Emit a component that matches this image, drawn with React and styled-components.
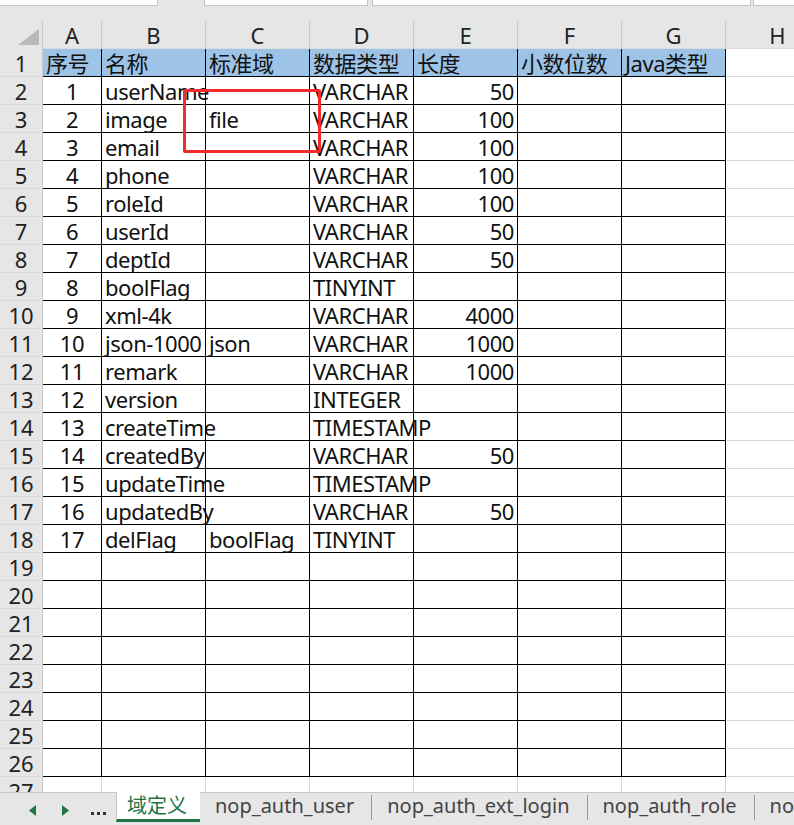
import React from "react";
import styled, { createGlobalStyle } from "styled-components";

const GlobalStyle = createGlobalStyle`
  html, body {
    margin: 0;
    padding: 0;
    background: #fff;
    overflow: hidden;
  }
  body {
    font-family: "Noto Sans", "Noto Sans CJK SC", sans-serif;
    color: #111;
  }
`;

const letters = ["A", "B", "C", "D", "E", "F", "G", "H"];
const heading = ["序号", "名称", "标准域", "数据类型", "长度", "小数位数", "Java类型"];
const fields = [
  ["userName", "", "VARCHAR", 50],
  ["image", "file", "VARCHAR", 100],
  ["email", "", "VARCHAR", 100],
  ["phone", "", "VARCHAR", 100],
  ["roleId", "", "VARCHAR", 100],
  ["userId", "", "VARCHAR", 50],
  ["deptId", "", "VARCHAR", 50],
  ["boolFlag", "", "TINYINT", ""],
  ["xml-4k", "", "VARCHAR", 4000],
  ["json-1000", "json", "VARCHAR", 1000],
  ["remark", "", "VARCHAR", 1000],
  ["version", "", "INTEGER", ""],
  ["createTime", "", "TIMESTAMP", ""],
  ["createdBy", "", "VARCHAR", 50],
  ["updateTime", "", "TIMESTAMP", ""],
  ["updatedBy", "", "VARCHAR", 50],
  ["delFlag", "boolFlag", "TINYINT", ""],
];
const ROWS = 27;
const BORDERED_ROWS = 26;
const BORDERED_COLS = 7;
const tabs = ["nop_auth_user", "nop_auth_ext_login", "nop_auth_role", "nop_auth_user_role"];

function cellValue(row, col) {
  if (row === 1) return heading[col] || "";
  const f = fields[row - 2];
  if (!f) return "";
  if (col === 0) return row - 1;
  return col <= 4 ? f[col - 1] : "";
}

function cellAlign(row, col) {
  if (row === 1) return "left";
  if (col === 0) return "center";
  if (col === 4) return "right";
  return "left";
}

export default function App() {
  const renderRow = (row) => (
    <React.Fragment key={row}>
      <RowHead>{row}</RowHead>
      {letters.map((l, col) => (
        <Cell
          key={l}
          $align={cellAlign(row, col)}
          $head={row === 1 && col < BORDERED_COLS}
          $dark={row <= BORDERED_ROWS && col < BORDERED_COLS}
        >
          {cellValue(row, col)}
        </Cell>
      ))}
    </React.Fragment>
  );

  const rows = [];
  for (let r = 1; r <= ROWS; r++) rows.push(renderRow(r));

  return (
    <>
      <GlobalStyle />
      <Page>
        <TopBar>
          <NameBox />
          <FuncBox />
          <FormulaBox />
          <ExpandBox />
        </TopBar>
        <Sheet>
          <Grid>
            <Corner>
              <svg width="21" height="16" viewBox="0 0 21 16">
                <polygon points="21,0 21,16 0,16" fill="#b9b9b9" />
              </svg>
            </Corner>
            {letters.map((l) => (
              <ColHead key={l}>{l}</ColHead>
            ))}
            {rows}
          </Grid>
          <Marker />
        </Sheet>
        <TabBar>
          <Nav>
            <NavButton>
              <svg width="7" height="11" viewBox="0 0 7 11">
                <polygon points="7,0 7,11 0,5.5" fill="#217346" />
              </svg>
            </NavButton>
            <NavButton>
              <svg width="7" height="11" viewBox="0 0 7 11">
                <polygon points="0,0 0,11 7,5.5" fill="#217346" />
              </svg>
            </NavButton>
            <NavButton $low>
              <Dots>
                <i />
                <i />
                <i />
              </Dots>
            </NavButton>
          </Nav>
          <ActiveTab>域定义</ActiveTab>
          {tabs.map((t, i) => (
            <React.Fragment key={t}>
              {i > 0 && <TabSep />}
              <Tab>{t}</Tab>
            </React.Fragment>
          ))}
        </TabBar>
      </Page>
    </>
  );
}

const Page = styled.div`
  width: 794px;
  height: 825px;
  display: flex;
  flex-direction: column;
  overflow: hidden;
  background: #fff;
`;

const TopBar = styled.div`
  height: 21px;
  flex: none;
  display: flex;
  align-items: flex-start;
  background: #e6e6e6;
`;
const BarBox = styled.div`
  height: 6px;
  box-sizing: border-box;
  background: #fff;
  border: 1px solid #c6c6c6;
  border-top: none;
`;
const NameBox = styled(BarBox)`
  width: 158px;
  border-left: none;
`;
const FuncBox = styled(BarBox)`
  width: 164px;
  margin-left: 46px;
`;
const FormulaBox = styled(BarBox)`
  width: 379px;
  margin-left: 4px;
`;
const ExpandBox = styled(BarBox)`
  flex: 1;
  margin-left: 2px;
  border-right: none;
`;

const Sheet = styled.div`
  position: relative;
  height: 771px;
  flex: none;
  overflow: hidden;
`;
const Grid = styled.div`
  display: grid;
  grid-template-columns: 43px 59px repeat(7, 104px);
  grid-auto-rows: 28px;
  font-size: 22px;
  line-height: 28px;
`;
const Corner = styled.div`
  box-sizing: border-box;
  background: #e6e6e6;
  border-right: 1px solid #c8c8c8;
  display: flex;
  justify-content: flex-end;
  align-items: flex-end;
  padding: 0 3px 4px 0;
`;
const ColHead = styled.div`
  box-sizing: border-box;
  background: #e6e6e6;
  border-right: 1px solid #c8c8c8;
  border-bottom: 1px solid #dcdcdc;
  text-align: center;
  color: #222;
`;
const RowHead = styled.div`
  box-sizing: border-box;
  background: #e6e6e6;
  border-right: 1px solid #c8c8c8;
  border-bottom: 1px solid #dadada;
  text-align: center;
  color: #222;
`;
const Cell = styled.div`
  box-sizing: border-box;
  white-space: nowrap;
  padding: 0 3px;
  letter-spacing: -0.45px;
  text-align: ${(p) => p.$align};
  background: ${(p) => (p.$head ? "#9dc3e6" : "transparent")};
  border-right: 1px solid ${(p) => (p.$dark ? "#000" : "#d9d9d9")};
  border-bottom: 1px solid ${(p) => (p.$dark ? "#000" : "#d9d9d9")};
  color: #111;
`;
const Marker = styled.div`
  position: absolute;
  left: 183px;
  top: 68px;
  width: 138px;
  height: 64px;
  box-sizing: border-box;
  border: 3px solid #f42a2a;
  border-radius: 2px;
  pointer-events: none;
`;

const TabBar = styled.div`
  flex: 1;
  display: flex;
  align-items: flex-start;
  box-sizing: border-box;
  background: #e6e6e6;
  border-top: 1px solid #c6c6c6;
  font-size: 20px;
  white-space: nowrap;
`;
const Nav = styled.div`
  width: 116px;
  flex: none;
  display: flex;
  padding-left: 16px;
  box-sizing: border-box;
`;
const NavButton = styled.div`
  width: 33px;
  height: 32px;
  display: flex;
  justify-content: center;
  align-items: center;
  padding-top: ${(p) => (p.$low ? "9px" : "2px")};
  box-sizing: border-box;
`;
const Dots = styled.span`
  display: flex;
  gap: 3px;
  i {
    width: 3px;
    height: 3px;
    background: #333;
  }
`;
const ActiveTab = styled.div`
  margin-top: -1px;
  flex: none;
  background: #fff;
  border-left: 1px solid #c6c6c6;
  border-bottom: 3px solid #217346;
  line-height: 27px;
  padding: 0 13px 0 10px;
  color: #217346;
`;
const Tab = styled.div`
  flex: none;
  line-height: 26px;
  padding: 0 17px 0 15px;
  color: #444;
`;
const TabSep = styled.div`
  flex: none;
  width: 1px;
  height: 25px;
  margin-top: 2px;
  background: #9a9a9a;
`;
